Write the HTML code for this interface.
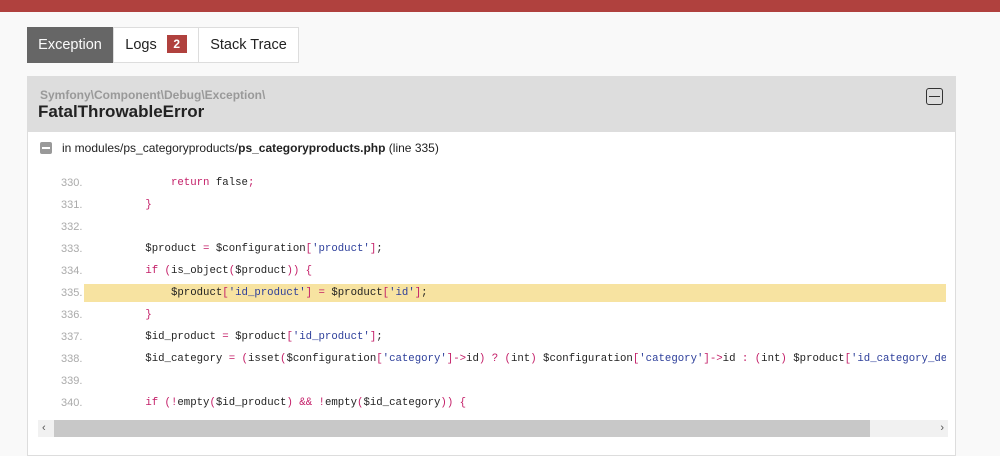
<!DOCTYPE html>
<html><head><meta charset="utf-8"><style>
body{margin:0;background:#f9f9f9;font-family:"Liberation Sans",Arial,sans-serif;width:1000px;height:440px;overflow:hidden;position:relative}
.top{position:absolute;left:0;top:0;width:1000px;height:12px;background:#b0413e}
.tabs{position:absolute;left:27px;top:27px;height:36px;display:flex;border:1px solid #ddd;box-sizing:border-box;background:#fff}
.tab{height:34px;line-height:34px;font-size:14.5px;color:#222;border-right:1px solid #ddd;text-align:center;box-sizing:border-box}
.tab.a{background:#666;color:#fafafa;margin:-1px 0 -1px -1px;height:36px;line-height:36px}
.badge{display:inline-block;background:#b0413e;color:#fff;font-size:12px;font-weight:bold;width:20px;height:18px;line-height:18px;text-align:center;margin-left:10px;vertical-align:1px}
.panel{position:absolute;left:27px;top:76px;width:929px;height:380px;background:#fff;border:1px solid #ddd;box-sizing:border-box}
.hd{height:55px;background:#ddd;position:relative}
.ns{position:absolute;left:12px;top:11px;font-size:12px;color:#999;font-weight:bold}
.cl{position:absolute;left:10px;top:25px;font-size:17px;font-weight:bold;color:#222}
.tog{position:absolute;right:12px;top:11px;width:15px;height:15px;border:1.6px solid #333;border-radius:3px}
.tog:after{content:"";position:absolute;left:2px;right:2px;top:6.5px;height:1.6px;background:#333}
.loc{position:absolute;left:12px;top:64px;font-size:12px;color:#222}
.loc i{display:inline-block;width:12px;height:12px;background:#999;border-radius:2px;vertical-align:-2px;margin-right:10px;position:relative}
.loc i:after{content:"";position:absolute;left:2px;right:2px;top:5px;height:2px;background:#fff}
.rows{position:absolute;left:0;top:95px;width:100%}
.r{position:relative;height:22px;line-height:22px;font-family:"Liberation Mono",monospace;font-size:10.7px;color:#222;white-space:pre}
.n{position:absolute;left:33px;font-family:"Liberation Sans",sans-serif;font-size:11px;color:#aaa}
.c{position:absolute;left:56px;width:862px;padding-left:10px;box-sizing:border-box;overflow:hidden;height:18px;line-height:18px;top:2px}
.h .c{background:#f7e3a1}
.k{color:#c31d67}.s{color:#2c3e9a}
.sb{position:absolute;left:10px;top:343px;width:910px;height:17px;background:#f1f1f1}
.th{position:absolute;left:16px;top:0;width:816px;height:17px;background:#c8c8c8}
.ar{position:absolute;top:0;font-size:11px;color:#555;line-height:17px}
</style></head><body>
<div class="top"></div>
<div class="tabs"><div class="tab a" style="width:87px">Exception</div><div class="tab" style="width:85px">Logs<span class="badge">2</span></div><div class="tab" style="width:99px;border-right:0">Stack Trace</div></div>
<div class="panel">
<div class="hd"><div class="ns">Symfony\Component\Debug\Exception\</div><div class="cl">FatalThrowableError</div><div class="tog"></div></div>
<div class="loc"><i></i>in modules/ps_categoryproducts/<b>ps_categoryproducts.php</b> (line 335)</div>
<div class="rows">
<div class="r"><span class="n">330.</span><span class="c">            <span class="k">return</span> false<span class="k">;</span></span></div>
<div class="r"><span class="n">331.</span><span class="c">        <span class="k">}</span></span></div>
<div class="r"><span class="n">332.</span><span class="c"></span></div>
<div class="r"><span class="n">333.</span><span class="c">        $product <span class="k">=</span> $configuration<span class="k">[</span><span class="s">'product'</span><span class="k">]</span>;</span></div>
<div class="r"><span class="n">334.</span><span class="c">        <span class="k">if (</span>is_object<span class="k">(</span>$product<span class="k">)) {</span></span></div>
<div class="r h"><span class="n">335.</span><span class="c">            $product<span class="k">[</span><span class="s">'id_product'</span><span class="k">]</span> <span class="k">=</span> $product<span class="k">[</span><span class="s">'id'</span><span class="k">]</span>;</span></div>
<div class="r"><span class="n">336.</span><span class="c">        <span class="k">}</span></span></div>
<div class="r"><span class="n">337.</span><span class="c">        $id_product <span class="k">=</span> $product<span class="k">[</span><span class="s">'id_product'</span><span class="k">]</span>;</span></div>
<div class="r"><span class="n">338.</span><span class="c">        $id_category <span class="k">= (</span>isset<span class="k">(</span>$configuration<span class="k">[</span><span class="s">'category'</span><span class="k">]-&gt;</span>id<span class="k">) ? (</span>int<span class="k">)</span> $configuration<span class="k">[</span><span class="s">'category'</span><span class="k">]-&gt;</span>id <span class="k">: (</span>int<span class="k">)</span> $product<span class="k">[</span><span class="s">'id_category_default'</span><span class="k">]</span>);</span></div>
<div class="r"><span class="n">339.</span><span class="c"></span></div>
<div class="r"><span class="n">340.</span><span class="c">        <span class="k">if (!</span>empty<span class="k">(</span>$id_product<span class="k">) &amp;&amp; !</span>empty<span class="k">(</span>$id_category<span class="k">)) {</span></span></div>
</div>
<div class="sb"><span class="ar" style="left:4px">&#8249;</span><div class="th"></div><span class="ar" style="right:4px">&#8250;</span></div>
</div>
</body></html>
